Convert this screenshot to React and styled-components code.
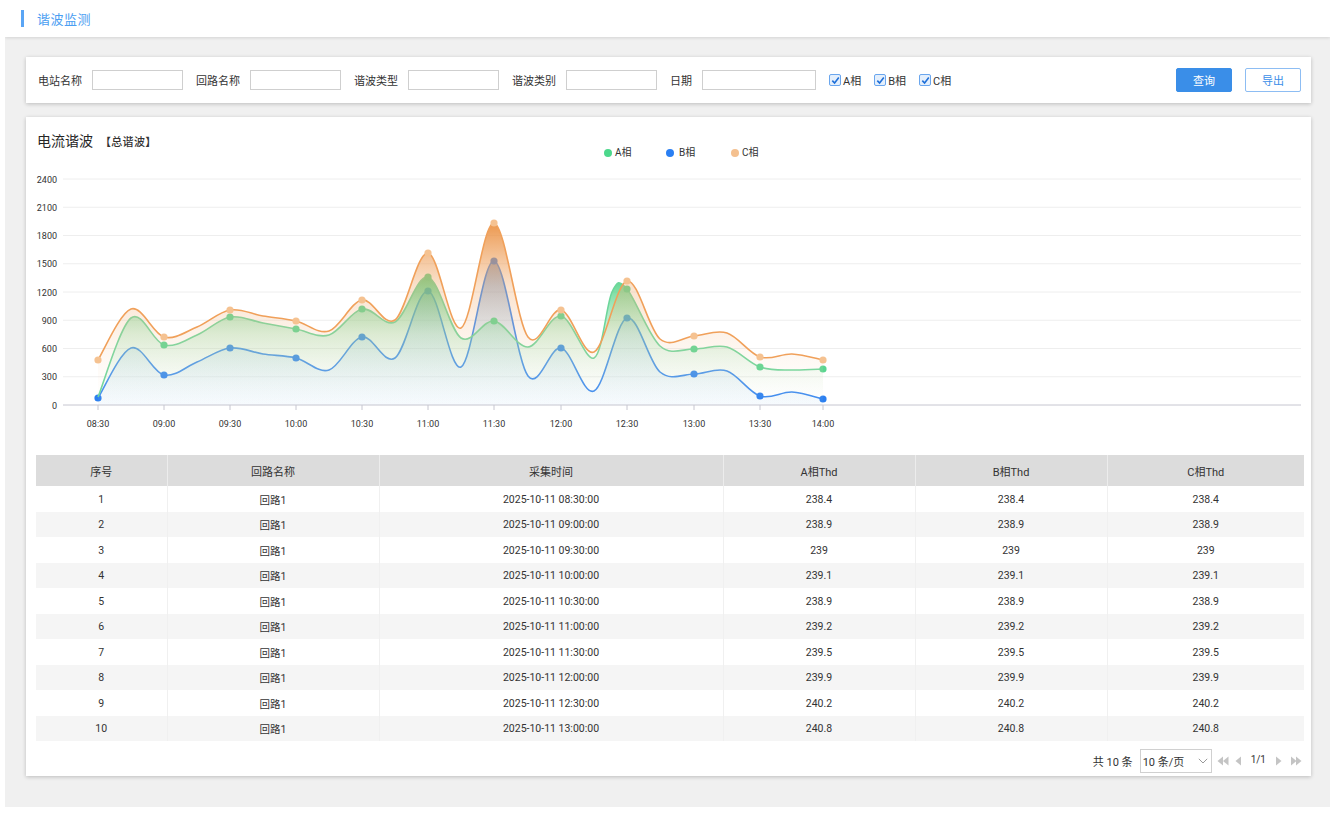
import React from 'react';
import styled, { createGlobalStyle } from 'styled-components';

const GlobalStyle = createGlobalStyle`
  html, body {
    margin: 0;
    padding: 0;
    background: #fff;
  }
  body {
    font-family: Roboto, "Noto Sans CJK SC", sans-serif;
    color: #333;
  }
  * { box-sizing: border-box; }
`;

const Page = styled.div`
  width: 1325px;
  height: 807px;
  margin-left: 5px;
  background: #f0f0f0;
  overflow: hidden;
`;

const TopBar = styled.div`
  height: 37px;
  background: #fff;
  display: flex;
  align-items: center;
  padding-left: 16px;
  box-shadow: 0 1px 3px rgba(0, 0, 0, 0.12);
`;

const TopMark = styled.span`
  width: 3px;
  height: 17px;
  background: #5aa5f5;
  margin-right: 13px;
`;

const TopTitle = styled.span`
  font-size: 13px;
  color: #4b9ef2;
  letter-spacing: 0.5px;
`;

const Card = styled.div`
  margin: ${(p) => p.$top}px 19px 0 21px;
  background: #fff;
  box-shadow: 0 1px 4px rgba(0, 0, 0, 0.22);
`;

const FilterBar = styled(Card)`
  height: 46px;
  display: flex;
  align-items: center;
  padding: 0 10px 0 12px;
`;

const Field = styled.label`
  display: flex;
  align-items: center;
  margin-right: 13px;
  font-size: 11px;
  color: #333;
`;

const FieldText = styled.span`
  margin-right: 10px;
  white-space: nowrap;
`;

const TextInput = styled.input`
  width: ${(p) => p.$w}px;
  height: 20px;
  border: 1px solid #cfcfcf;
  outline: none;
  padding: 0 4px;
  font-size: 11px;
`;

const Check = styled.label`
  display: flex;
  align-items: center;
  margin-right: 13px;
  font-size: 11px;
  color: #333;
`;

const CheckBox = styled.span`
  width: 12px;
  height: 12px;
  border: 1px solid #6aa6ee;
  border-radius: 2px;
  background: #e4effc;
  display: flex;
  align-items: center;
  justify-content: center;
  margin-right: 2px;
`;

const Buttons = styled.div`
  margin-left: auto;
  display: flex;
  gap: 13px;
`;

const Button = styled.button`
  width: 56px;
  height: 24px;
  font-size: 11px;
  font-family: inherit;
  border-radius: 2px;
  cursor: pointer;
  border: 1px solid ${(p) => (p.$primary ? '#3a8ee8' : '#8dbdf3')};
  background: ${(p) => (p.$primary ? '#3a8ee8' : '#fff')};
  color: ${(p) => (p.$primary ? '#fff' : '#3a8ee8')};
`;

const ChartCard = styled(Card)`
  height: 659px;
  display: flex;
  flex-direction: column;
`;

const ChartHead = styled.div`
  height: 50px;
  display: grid;
  grid-template-columns: 578px auto 1fr;
`;

const ChartTitle = styled.div`
  padding: 16px 0 0 11px;
  display: flex;
  align-items: baseline;
  line-height: 16px;
`;

const TitleMain = styled.span`
  font-size: 14px;
  color: #262626;
`;

const TitleSub = styled.span`
  font-size: 11px;
  font-weight: 500;
  color: #333;
  margin-left: 7px;
  letter-spacing: 0.3px;
`;

const Legend = styled.div`
  display: flex;
  padding-top: 21px;
  line-height: 14px;
`;

const LegendItem = styled.div`
  display: flex;
  align-items: center;
  width: ${(p) => p.$w}px;
  font-size: 10px;
  color: #333;
`;

const LegendDot = styled.span`
  width: 8px;
  height: 8px;
  border-radius: 50%;
  background: ${(p) => p.$c};
  margin-right: ${(p) => p.$gap}px;
`;

const ChartSvg = styled.svg`
  display: block;
`;

const Table = styled.table`
  margin: 15px 7px 0 10px;
  width: 1268px;
  border-collapse: collapse;
  table-layout: fixed;
  font-size: 11px;
  color: #333;
`;

const Th = styled.th`
  height: 31px;
  font-weight: 400;
  background: #dcdcdc;
  border-right: 1px solid #ececec;
  &:last-child { border-right: none; }
`;

const Row = styled.tr`
  background: ${(p) => (p.$alt ? '#f5f5f5' : '#fff')};
`;

const Td = styled.td`
  height: 25.5px;
  padding: 1px 0 0;
  text-align: center;
  font-family: "Liberation Sans Narrow", Roboto, "Noto Sans CJK SC", sans-serif;
  font-size: 10.5px;
  border-right: 1px solid #f0f0f0;
  &:last-child { border-right: none; }
`;

const Pager = styled.div`
  margin: 8px 9px 0 0;
  display: flex;
  justify-content: flex-end;
  align-items: center;
  font-size: 11px;
  color: #333;
`;

const PagerTotal = styled.span`
  margin-right: 7px;
`;

const SizeSelect = styled.div`
  width: 72px;
  height: 24px;
  border: 1px solid #d0d0d0;
  display: flex;
  align-items: center;
  justify-content: space-between;
  padding: 0 3px 0 2px;
  font-size: 11px;
  margin-right: 5px;
`;

const NavBtn = styled.span`
  display: flex;
  align-items: center;
  margin-left: ${(p) => p.$ml}px;
`;

const PageNum = styled.span`
  font-size: 10px;
  margin: 0 9px;
  position: relative;
  top: -2px;
`;

const HX = [98, 164, 230, 296, 362, 428, 494, 561, 627, 694, 760, 823];
const MX = [131, 197, 263, 329, 395, 461, 528, 594, 660, 727, 792];
const XL = ['08:30', '09:00', '09:30', '10:00', '10:30', '11:00', '11:30', '12:00', '12:30', '13:00', '13:30', '14:00'];
const BASE = 405;

const series = [
  {
    key: 'B',
    line: '#3a88f0',
    dot: '#2b7ff0',
    stops: [
      [0, 'rgba(70,110,170,0.6)'],
      [0.5, 'rgba(150,195,232,0.28)'],
      [1, 'rgba(220,236,250,0.25)'],
    ],
    halves: [398, 375, 348, 358, 337, 291, 261, 348, 318, 374, 396, 399],
    mids: [348, 362, 354, 370, 358, 367, 376, 391, 372, 371, 392],
    extra: [],
    skipDot: [],
  },
  {
    key: 'A',
    line: '#6dd69b',
    dot: '#5ad590',
    stops: [
      [0, 'rgba(60,205,118,0.85)'],
      [0.45, 'rgba(120,222,160,0.3)'],
      [1, 'rgba(225,247,234,0)'],
    ],
    halves: [397, 345, 317, 329, 309, 277, 321, 316, 289, 349, 367, 369],
    mids: [318, 335, 323, 335, 322, 338, 347, 358, 346, 347, 370],
    extra: [[612, 292]],
    skipDot: [0],
  },
  {
    key: 'C',
    line: '#f0a05a',
    dot: '#f5c291',
    stops: [
      [0, 'rgba(234,140,58,0.9)'],
      [0.35, 'rgba(240,172,112,0.35)'],
      [1, 'rgba(250,230,210,0)'],
    ],
    halves: [360, 337, 310, 321, 300, 253, 223, 310, 281, 336, 357, 360],
    mids: [309, 327, 316, 331, 320, 328, 337, 352, 339, 333, 354],
    extra: [],
    skipDot: [],
  },
];

const smooth = (pts) => {
  let d = `M${pts[0][0]},${pts[0][1]}`;
  for (let i = 0; i < pts.length - 1; i++) {
    const p0 = pts[i - 1] || pts[i];
    const p1 = pts[i];
    const p2 = pts[i + 1];
    const p3 = pts[i + 2] || p2;
    const c1x = p1[0] + (p2[0] - p0[0]) / 6;
    const c1y = p1[1] + (p2[1] - p0[1]) / 6;
    const c2x = p2[0] - (p3[0] - p1[0]) / 6;
    const c2y = p2[1] - (p3[1] - p1[1]) / 6;
    d += ` C${c1x.toFixed(1)},${c1y.toFixed(1)} ${c2x.toFixed(1)},${c2y.toFixed(1)} ${p2[0]},${p2[1]}`;
  }
  return d;
};

const pointsOf = (s) => {
  const pts = [
    ...HX.map((x, i) => [x, s.halves[i]]),
    ...MX.map((x, i) => [x, s.mids[i]]),
    ...s.extra,
  ];
  return pts.sort((a, b) => a[0] - b[0]);
};

const Chart = () => {
  const yTicks = [0, 300, 600, 900, 1200, 1500, 1800, 2100, 2400];
  return (
    <ChartSvg width="1285" height="273" viewBox="26 167 1285 273">
      <defs>
        {series.map((s) => (
          <linearGradient key={s.key} id={`grad${s.key}`} x1="0" y1="0" x2="0" y2="1">
            {s.stops.map(([o, c]) => (
              <stop key={o} offset={o} stopColor={c} />
            ))}
          </linearGradient>
        ))}
      </defs>
      {yTicks.map((v, i) => {
        const y = BASE - i * 28.25;
        return (
          <g key={v}>
            {i > 0 && <line x1="63" x2="1301" y1={y} y2={y} stroke="#eeeeee" strokeWidth="1" />}
            <text x="57" y={y + 3.5} textAnchor="end" fontSize="9" fill="#333" fontFamily="Roboto, sans-serif">
              {v}
            </text>
          </g>
        );
      })}
      {series.map((s) => {
        const pts = pointsOf(s);
        const d = smooth(pts);
        const area = `${d} L${pts[pts.length - 1][0]},${BASE} L${pts[0][0]},${BASE} Z`;
        return (
          <g key={s.key}>
            <path d={area} fill={`url(#grad${s.key})`} />
            <path d={d} fill="none" stroke={s.line} strokeWidth="1.6" />
            {HX.map((x, i) =>
              s.skipDot.includes(i) ? null : (
                <circle key={x} cx={x} cy={s.halves[i]} r="3.6" fill={s.dot} />
              )
            )}
          </g>
        );
      })}
      <line x1="63" x2="1301" y1={BASE} y2={BASE} stroke="#c6c6d0" strokeWidth="1" />
      {HX.map((x, i) => (
        <g key={x}>
          <line x1={x} x2={x} y1={BASE} y2={BASE + 5} stroke="#c6c6d0" strokeWidth="1" />
          <text x={x} y="427" textAnchor="middle" fontSize="9" fill="#333" fontFamily="Roboto, sans-serif">
            {XL[i]}
          </text>
        </g>
      ))}
    </ChartSvg>
  );
};

const rows = [
  ['08:30:00', '238.4'],
  ['09:00:00', '238.9'],
  ['09:30:00', '239'],
  ['10:00:00', '239.1'],
  ['10:30:00', '238.9'],
  ['11:00:00', '239.2'],
  ['11:30:00', '239.5'],
  ['12:00:00', '239.9'],
  ['12:30:00', '240.2'],
  ['13:00:00', '240.8'],
];

const cols = [
  ['序号', 131],
  ['回路名称', 212],
  ['采集时间', 344],
  ['A相Thd', 192],
  ['B相Thd', 192],
  ['C相Thd', 197],
];

const filters = [
  ['电站名称', 91],
  ['回路名称', 91],
  ['谐波类型', 91],
  ['谐波类别', 91],
  ['日期', 114],
];

const Tick = () => (
  <svg width="9" height="9" viewBox="0 0 9 9">
    <path d="M1.3 4.6 L3.6 7 L7.8 1.6" fill="none" stroke="#1f6fd8" strokeWidth="1.6" />
  </svg>
);

const Tri = ({ dir, double }) => (
  <svg width={double ? 12 : 7} height="10" viewBox={double ? '0 0 12 10' : '0 0 7 10'}>
    {dir === 'left' ? (
      <>
        <path d="M6 0.5 L0.5 5 L6 9.5 Z" fill="#c4c4c4" />
        {double && <path d="M11.5 0.5 L6 5 L11.5 9.5 Z" fill="#c4c4c4" />}
      </>
    ) : (
      <>
        <path d="M1 0.5 L6.5 5 L1 9.5 Z" fill="#c4c4c4" />
        {double && <path d="M6 0.5 L11.5 5 L6 9.5 Z" fill="#c4c4c4" />}
      </>
    )}
  </svg>
);

export default function App() {
  return (
    <>
      <GlobalStyle />
      <Page>
        <TopBar>
          <TopMark />
          <TopTitle>谐波监测</TopTitle>
        </TopBar>

        <FilterBar $top={20}>
          {filters.map(([label, w]) => (
            <Field key={label}>
              <FieldText>{label}</FieldText>
              <TextInput $w={w} />
            </Field>
          ))}
          {['A相', 'B相', 'C相'].map((c) => (
            <Check key={c}>
              <CheckBox>
                <Tick />
              </CheckBox>
              {c}
            </Check>
          ))}
          <Buttons>
            <Button $primary>查询</Button>
            <Button>导出</Button>
          </Buttons>
        </FilterBar>

        <ChartCard $top={14}>
          <ChartHead>
            <ChartTitle>
              <TitleMain>电流谐波</TitleMain>
              <TitleSub>【总谐波】</TitleSub>
            </ChartTitle>
            <Legend>
              <LegendItem $w={62}>
                <LegendDot $c="#4cd88c" $gap={3} />
                A相
              </LegendItem>
              <LegendItem $w={65}>
                <LegendDot $c="#2a7ff3" $gap={5} />
                B相
              </LegendItem>
              <LegendItem $w={40}>
                <LegendDot $c="#f4c08f" $gap={3} />
                C相
              </LegendItem>
            </Legend>
            <div />
          </ChartHead>

          <Chart />

          <Table>
            <colgroup>
              {cols.map(([name, w]) => (
                <col key={name} style={{ width: w }} />
              ))}
            </colgroup>
            <thead>
              <tr>
                {cols.map(([name]) => (
                  <Th key={name}>{name}</Th>
                ))}
              </tr>
            </thead>
            <tbody>
              {rows.map(([t, v], i) => (
                <Row key={t} $alt={i % 2 === 1}>
                  <Td>{i + 1}</Td>
                  <Td>回路1</Td>
                  <Td>2025-10-11 {t}</Td>
                  <Td>{v}</Td>
                  <Td>{v}</Td>
                  <Td>{v}</Td>
                </Row>
              ))}
            </tbody>
          </Table>

          <Pager>
            <PagerTotal>共 10 条</PagerTotal>
            <SizeSelect>
              <span>10 条/页</span>
              <svg width="10" height="6" viewBox="0 0 10 6">
                <path d="M0.8 0.8 L5 5 L9.2 0.8" fill="none" stroke="#999" strokeWidth="1" />
              </svg>
            </SizeSelect>
            <NavBtn $ml={0}>
              <Tri dir="left" double />
            </NavBtn>
            <NavBtn $ml={6}>
              <Tri dir="left" />
            </NavBtn>
            <PageNum>1/1</PageNum>
            <NavBtn $ml={0}>
              <Tri dir="right" />
            </NavBtn>
            <NavBtn $ml={8}>
              <Tri dir="right" double />
            </NavBtn>
          </Pager>
        </ChartCard>
      </Page>
    </>
  );
}
